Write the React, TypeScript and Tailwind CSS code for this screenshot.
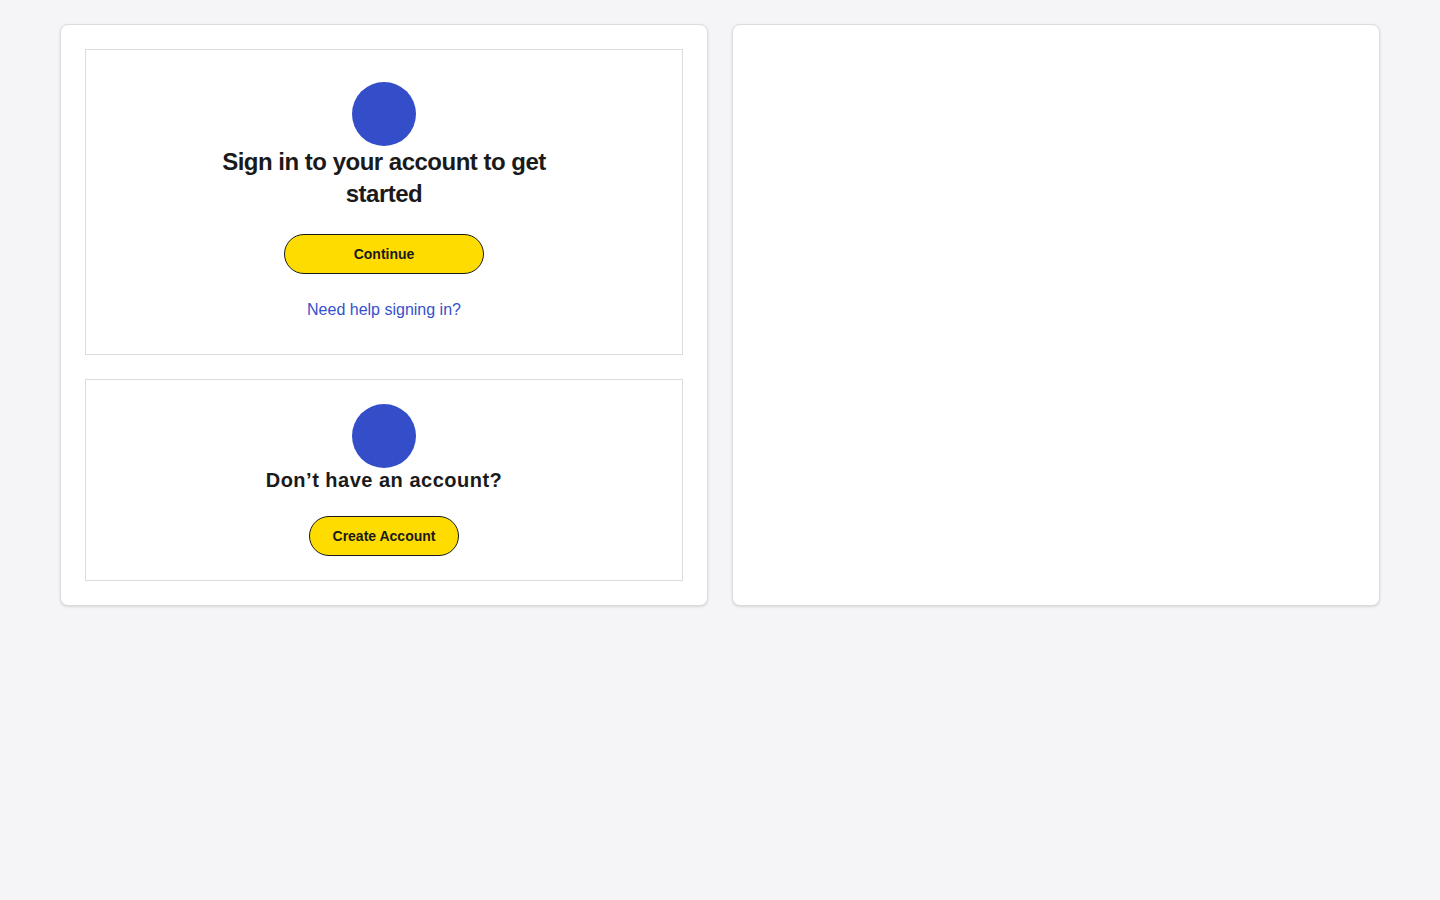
export default function App() {
  return (
    <div className="min-h-screen bg-[#f5f5f7] font-['Liberation_Sans',Arial,sans-serif] text-[#1a1a1a]">
      <div className="mx-auto grid max-w-[1320px] grid-cols-2 gap-6 pt-6">
        {/* LEFT CARD */}
        <div className="flex flex-col gap-6 rounded-lg border border-[#dcdcdc] bg-white p-6 shadow-sm">
          <div className="flex flex-col items-center border border-[#dcdcdc] px-8 py-8 text-center">
            <div className="h-16 w-16 rounded-full bg-[#334ec8]" />
            <h2 className="max-w-[360px] text-2xl leading-8 font-bold tracking-[-0.5px]">
              Sign in to your account to get started
            </h2>
            <button className="mt-6 h-10 w-[200px] rounded-full border border-[#1a1a1a] bg-[#ffdc00] text-sm font-bold">
              Continue
            </button>
            <a href="#" className="mt-6 text-base leading-6 text-[#3650cc]">
              Need help signing in?
            </a>
          </div>

          <div className="flex flex-col items-center border border-[#dcdcdc] p-6 text-center">
            <div className="h-16 w-16 rounded-full bg-[#334ec8]" />
            <h2 className="text-xl leading-6 font-bold tracking-[0.5px]">Don’t have an account?</h2>
            <button className="mt-6 h-10 w-[150px] rounded-full border border-[#1a1a1a] bg-[#ffdc00] text-sm font-bold">
              Create Account
            </button>
          </div>
        </div>

        {/* RIGHT CARD */}
        <div className="rounded-lg border border-[#dcdcdc] bg-white shadow-sm" />
      </div>
    </div>
  );
}
